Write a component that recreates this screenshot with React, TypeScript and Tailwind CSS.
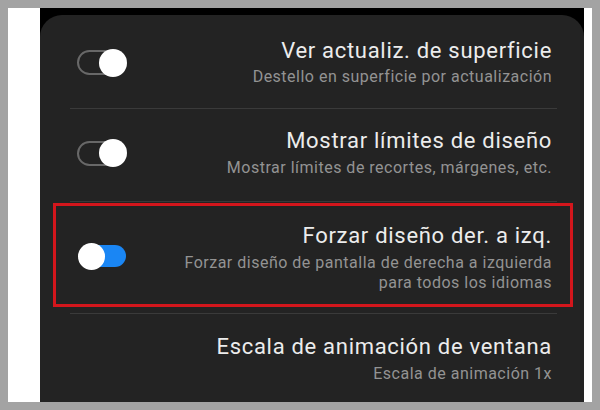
import React from "react";

type Row = { title: string; desc: string[]; on?: boolean };

const rows: Row[] = [
  { title: "Ver actualiz. de superficie", desc: ["Destello en superficie por actualización"], on: false },
  { title: "Mostrar límites de diseño", desc: ["Mostrar límites de recortes, márgenes, etc."], on: false },
  {
    title: "Forzar diseño der. a izq.",
    desc: ["Forzar diseño de pantalla de derecha a izquierda", "para todos los idiomas"],
    on: true,
  },
];

function Toggle({ on }: { on: boolean }) {
  if (on) {
    return (
      <div className="relative w-[48px] h-[27px] flex items-center shrink-0">
        <div className="ml-[2px] w-[46px] h-[22px] rounded-full bg-[#1a86f4]" />
        <div className="absolute left-0 top-0 w-[27px] h-[27px] rounded-full bg-white" />
      </div>
    );
  }
  return (
    <div className="relative w-[50px] h-[28px] flex items-center shrink-0">
      <div className="w-[48px] h-[25px] rounded-full border-2 border-[#686868]" />
      <div className="absolute right-0 top-0 w-[28px] h-[28px] rounded-full bg-white" />
    </div>
  );
}

function Texts({ title, desc, gap }: { title: string; desc: string[]; gap: string }) {
  return (
    <div className={`flex flex-col items-end text-right ${gap}`}>
      <p className="text-[22px] leading-[24px] tracking-[0.7px] text-[#ececec] whitespace-nowrap">{title}</p>
      <div className="flex flex-col items-end">
        {desc.map((d) => (
          <p key={d} className="text-[16px] leading-[20px] tracking-[0.5px] text-[#939393] whitespace-nowrap">
            {d}
          </p>
        ))}
      </div>
    </div>
  );
}

function Divider() {
  return <div className="h-px ml-[30px] mr-[27px] bg-[#3a3a3a]" />;
}

export default function App() {
  return (
    <div
      className="w-[600px] h-[410px] bg-[#a3a3a3] p-2"
      style={{ fontFamily: "Roboto, 'Noto Sans', sans-serif" }}
    >
      <div className="h-full bg-white pl-[32px] pr-[8px]">
        <div className="h-full bg-black pt-[7px]">
          <div className="h-full bg-[#232323] rounded-t-[22px] flex flex-col overflow-hidden">
            {/* row 1 */}
            <div className="h-[93px] pt-[2px] pl-[37px] pr-[32px] flex items-center justify-between">
              <Toggle on={false} />
              <Texts title={rows[0].title} desc={rows[0].desc} gap="gap-[4px]" />
            </div>
            <Divider />

            {/* row 2 */}
            <div className="h-[92px] pb-[4px] pl-[37px] pr-[32px] flex items-center justify-between">
              <Toggle on={false} />
              <Texts title={rows[1].title} desc={rows[1].desc} gap="gap-[5px]" />
            </div>
            <Divider />

            {/* row 3, highlighted */}
            <div className="h-[111px] pt-px pl-[13px] pr-[11px]">
              <div className="h-[104px] border-[3px] border-[#d3161c] pt-[6px] pl-[22px] pr-[18px] flex items-center justify-between">
                <div className="mb-[4px]">
                  <Toggle on={true} />
                </div>
                <Texts title={rows[2].title} desc={rows[2].desc} gap="gap-[5px]" />
              </div>
            </div>
            <Divider />

            {/* row 4 */}
            <div className="pt-[21px] pr-[32px] flex justify-end">
              <Texts
                title="Escala de animación de ventana"
                desc={["Escala de animación 1x"]}
                gap="gap-[5px]"
              />
            </div>
          </div>
        </div>
      </div>
    </div>
  );
}
